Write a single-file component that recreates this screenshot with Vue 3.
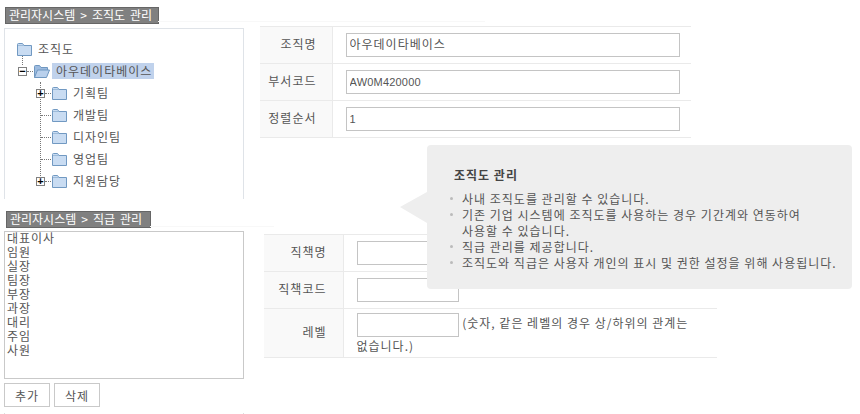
<template>
  <div class="page">
    <section class="row row-top">
      <div class="left">
        <h2 class="title title-org">관리자시스템 &gt; 조직도 관리</h2>
        <div class="tree">
          <div class="node root">
            <svg class="folder" width="15" height="13" viewBox="0 0 15 13">
              <path d="M.5 12.5V1.5Q.5.5 1.5.5H5.5L7 2.5H14.5V12.5Z" fill="#c9dcf2" stroke="#7199c2" />
              <path d="M1 2.5H7" stroke="#9dbbd9" />
            </svg>
            <span class="label">조직도</span>
          </div>
          <div class="node open">
            <i class="stem-up"></i>
            <span class="toggle">&minus;</span>
            <i class="dash"></i>
            <svg class="folder" width="16" height="13" viewBox="0 0 16 13">
              <path d="M.5 12.5V1.5Q.5.5 1.5.5H5.5L7 2.5H13.5V5" fill="#9dbbdf" stroke="#6f97c0" />
              <path d="M.5 12.5L3.5 5H15.5L12.5 12.5Z" fill="#b9d0ec" stroke="#6f97c0" />
            </svg>
            <span class="label selected">아우데이타베이스</span>
          </div>
          <ul class="children">
            <li v-for="team in teams" :key="team.name" class="child">
              <span v-if="team.more" class="toggle plus">+</span>
              <i class="dash" :class="{ long: !team.more }"></i>
              <svg class="folder" width="15" height="13" viewBox="0 0 15 13">
                <path d="M.5 12.5V1.5Q.5.5 1.5.5H5.5L7 2.5H14.5V12.5Z" fill="#c9dcf2" stroke="#7199c2" />
                <path d="M1 2.5H7" stroke="#9dbbd9" />
              </svg>
              <span class="label">{{ team.name }}</span>
            </li>
          </ul>
        </div>
      </div>
      <table class="form form-org">
        <tbody>
          <tr>
            <th>조직명</th>
            <td><input class="field wide" type="text" value="아우데이타베이스" /></td>
          </tr>
          <tr>
            <th>부서코드</th>
            <td><input class="field wide latin" type="text" value="AW0M420000" /></td>
          </tr>
          <tr>
            <th>정렬순서</th>
            <td><input class="field wide latin" type="text" value="1" /></td>
          </tr>
        </tbody>
      </table>
    </section>

    <section class="row row-bottom">
      <div class="left">
        <h2 class="title title-rank">관리자시스템 &gt; 직급 관리</h2>
        <ul class="ranks">
          <li v-for="rank in ranks" :key="rank">{{ rank }}</li>
        </ul>
        <div class="buttons">
          <button type="button">추가</button>
          <button type="button">삭제</button>
        </div>
        <div class="tail"></div>
      </div>
      <table class="form form-rank">
        <tbody>
          <tr>
            <th>직책명</th>
            <td><input class="field" type="text" /></td>
          </tr>
          <tr>
            <th>직책코드</th>
            <td><input class="field" type="text" /></td>
          </tr>
          <tr class="tall">
            <th>레벨</th>
            <td><input class="field" type="text" /> (숫자, 같은 레벨의 경우 상/하위의 관계는 없습니다.)</td>
          </tr>
        </tbody>
      </table>
    </section>

    <aside class="help">
      <h3>조직도 관리</h3>
      <ul>
        <li v-for="line in helpLines" :key="line">{{ line }}</li>
      </ul>
    </aside>
  </div>
</template>

<script setup>
const teams = [
  { name: '기획팀', more: true },
  { name: '개발팀', more: false },
  { name: '디자인팀', more: false },
  { name: '영업팀', more: false },
  { name: '지원담당', more: true },
]

const ranks = ['대표이사', '임원', '실장', '팀장', '부장', '과장', '대리', '주임', '사원']

const helpLines = [
  '사내 조직도를 관리할 수 있습니다.',
  '기존 기업 시스템에 조직도를 사용하는 경우 기간계와 연동하여 사용할 수 있습니다.',
  '직급 관리를 제공합니다.',
  '조직도와 직급은 사용자 개인의 표시 및 권한 설정을 위해 사용됩니다.',
]
</script>

<style>
html,
body {
  background: #fff;
  overflow: hidden;
}
</style>

<style scoped>
* {
  box-sizing: border-box;
  margin: 0;
  padding: 0;
}

.page {
  position: relative;
  width: 860px;
  height: 414px;
  overflow: hidden;
  font-family: 'Noto Sans CJK KR', 'Noto Sans', sans-serif;
  font-size: 12px;
  letter-spacing: 1px;
  word-break: keep-all;
  color: #555;
}

.row {
  display: flex;
  align-items: flex-start;
}

.row-top {
  height: 211px;
  padding-top: 7px;
}

.row-bottom {
  height: 203px;
}

.left {
  flex: none;
  width: 260px;
  padding-left: 4px;
}

.title {
  position: relative;
  height: 17px;
  padding-left: 3px;
  border: 1px solid #666;
  background: #808080;
  color: #fff;
  font-size: 12px;
  font-weight: 400;
  letter-spacing: 0;
  word-spacing: 2.3px;
  line-height: 14px;
  white-space: nowrap;
}

/* faint rule running on from the title bar */
.title::after {
  content: '';
  position: absolute;
  left: 100%;
  height: 1px;
  background: #f8f8f8;
}

.title-org {
  width: 154px;
  margin-left: 1px;
}

.title-org::after {
  top: 13px;
  width: 327px;
}

.title-rank {
  width: 145px;
  margin-left: 2px;
}

.title-rank::after {
  top: 14px;
  width: 124px;
}

.tree {
  width: 240px;
  height: 171px;
  margin-top: 4px;
  padding-top: 9px;
  border: 1px solid #dfe3e8;
  border-bottom: none;
}

.node,
.child {
  position: relative;
  display: flex;
  align-items: center;
  height: 22px;
  list-style: none;
}

.root {
  padding-left: 12px;
}

.root .label {
  margin-left: 6px;
}

.open {
  padding-left: 13px;
}

.folder {
  flex: none;
}

.label {
  line-height: 16px;
  white-space: nowrap;
}

.selected {
  width: 102px;
  height: 16px;
  margin-left: 2px;
  padding-left: 4px;
  background: #c0d2ec;
}

.toggle {
  flex: none;
  display: flex;
  align-items: center;
  justify-content: center;
  width: 9px;
  height: 9px;
  border: 1px solid #808080;
  background: #fff;
  color: #000;
  font-family: 'Liberation Sans', sans-serif;
  font-size: 11px;
  font-weight: 700;
  letter-spacing: 0;
  line-height: 7px;
}

.dash {
  flex: none;
  width: 6px;
  margin: 0 1px 0 0;
  border-top: 1px dotted #777;
}

.dash.long {
  width: 10px;
  margin-left: 5px;
}

.stem-up {
  position: absolute;
  left: 17px;
  top: -4px;
  height: 9px;
  border-left: 1px dotted #777;
}

.children {
  position: relative;
  padding-left: 31px;
  list-style: none;
}

.children::before {
  content: '';
  position: absolute;
  left: 35px;
  top: 0;
  height: 94px;
  border-left: 1px dotted #777;
}

.child .label {
  margin-left: 6px;
}

.form {
  flex: none;
  border-collapse: collapse;
  table-layout: fixed;
}

.form tr {
  height: 37px;
  border-top: 1px solid #eaeaea;
  border-bottom: 1px solid #eaeaea;
}

.form th {
  padding: 0 16px 3px 0;
  border-right: 1px solid #eaeaea;
  background: #f9f9f9;
  font-weight: 400;
  text-align: right;
}

.form td {
  padding-left: 13px;
  line-height: 17px;
}

.form-org {
  width: 431px;
  margin-top: 19px;
}

.form-org th {
  width: 72px;
  padding-right: 15px;
}

.form-rank {
  width: 453px;
  margin-top: 23px;
  margin-left: 4px;
}

.form-rank th {
  width: 79px;
}

.form-rank .tall {
  height: 49px;
}

.field {
  width: 102px;
  height: 24px;
  padding: 0 3px 3px;
  border: 1px solid #c4c4c4;
  background: #fff;
  color: #555;
  font: inherit;
  letter-spacing: inherit;
  vertical-align: middle;
}

.field.wide {
  width: 334px;
}

.field.latin {
  padding-bottom: 1px;
  font-family: 'Liberation Sans', sans-serif;
  font-size: 11px;
  letter-spacing: 0.2px;
}

.ranks {
  width: 240px;
  height: 148px;
  margin-top: 3px;
  padding-left: 2px;
  border: 1px solid #c9c9c9;
  line-height: 14px;
  list-style: none;
}

.ranks li:first-child {
  margin-top: -1px;
}

.buttons {
  display: flex;
  gap: 4px;
  margin-top: 4px;
}

.buttons button {
  width: 46px;
  height: 24px;
  border: 1px solid #c9c9c9;
  background: #fff;
  color: #555;
  font: inherit;
  letter-spacing: inherit;
}

.tail {
  width: 240px;
  height: 1px;
  margin-top: 6px;
  border-left: 1px solid #ddd;
  border-right: 1px solid #ddd;
}

.help {
  position: absolute;
  left: 427px;
  top: 145px;
  width: 425px;
  height: 144px;
  padding: 22px 14px 0 27px;
  border-radius: 4px;
  background: #eee;
}

.help::before {
  content: '';
  position: absolute;
  left: -27px;
  top: 47px;
  border-style: solid;
  border-width: 15px 27px 16px 0;
  border-color: transparent #eee transparent transparent;
}

.help h3 {
  margin-bottom: 8px;
  color: #444;
  font-size: 12px;
  font-weight: 700;
  line-height: 16px;
}

.help ul {
  list-style: none;
  margin-left: 8px;
  line-height: 16px;
}

.help li {
  position: relative;
}

.help li::before {
  content: '';
  position: absolute;
  left: -12px;
  top: 6px;
  width: 3px;
  height: 3px;
  border-radius: 50%;
  background: #bbb;
}
</style>
